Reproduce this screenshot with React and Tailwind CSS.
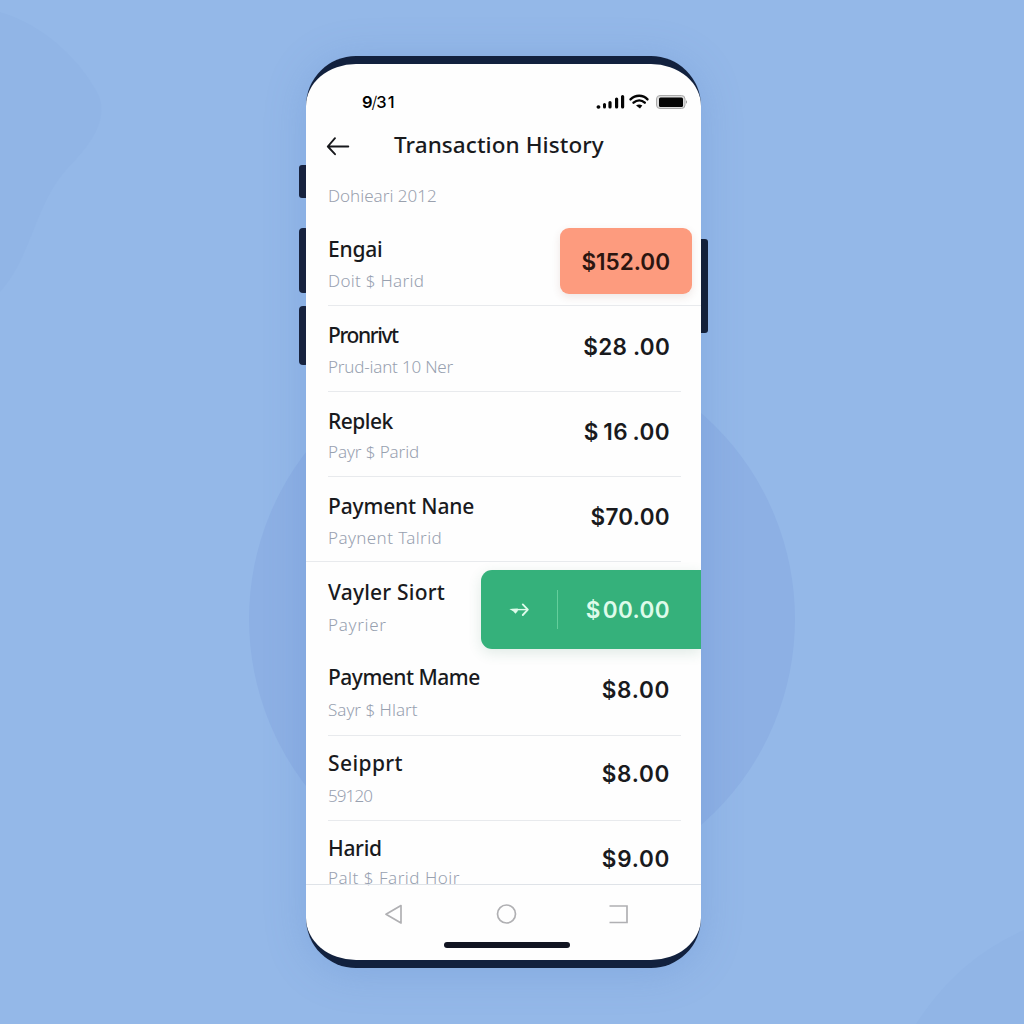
const rows = [
  { name: "Engai", sub: "Doit $ Harid", amount: "$152.00", row: "h-[86px] pl-[22px] pt-[14px]", line: "ml-[22px] mr-0", nameCls: "tracking-[-0.2px]", subCls: "mt-[5px] tracking-[0.3px]", tag: "orange" },
  { name: "Pronrivt", sub: "Prud-iant 10 Ner", amount: "$28 .00", row: "h-[86px] pl-[22px] pt-[14px]", line: "ml-[22px] mr-5", nameCls: "tracking-[-1.4px]", subCls: "mt-[5px] tracking-[-0.2px]", amtCls: "mt-px tracking-[0.25px]" },
  { name: "Replek", sub: "Payr $ Parid", amount: "$ 16 .00", row: "h-[85px] pl-[22px] pt-[14px]", line: "ml-[22px] mr-5", nameCls: "tracking-[-0.5px]", subCls: "mt-1 tracking-[-0.1px]", amtCls: "tracking-[0.4px] [word-spacing:-1.500px]" },
  { name: "Payment Nane", sub: "Paynent Talrid", amount: "$70.00", row: "h-[85px] pl-[22px] pt-[14px]", line: "ml-0 mr-5", nameCls: "tracking-[-0.15px]", subCls: "mt-[5px] tracking-[0.4px]", amtCls: "tracking-[0.3px]" },
  { name: "Vayler Siort", sub: "Payrier", amount: "$00.00", row: "h-[87px] pl-[22px] pt-[15px]", line: "hidden", nameCls: "tracking-[0.2px]", subCls: "mt-[6px] tracking-[0.7px]", tag: "green" },
  { name: "Payment Mame", sub: "Sayr $ Hlart", amount: "$8.00", row: "h-[87px] pl-[22px] pt-[13px]", line: "ml-[22px] mr-5", nameCls: "tracking-[-0.5px]", subCls: "mt-[6px]", amtCls: "mt-[2px] tracking-[0.7px]" },
  { name: "Seipprt", sub: "59120", amount: "$8.00", row: "h-[85px] pl-[22px] pt-[12px]", line: "ml-[22px] mr-5", nameCls: "tracking-[0.4px]", subCls: "mt-[6px] tracking-[-0.9px]", amtCls: "tracking-[0.7px]" },
  { name: "Harid", sub: "Palt $ Farid Hoir", amount: "$9.00", row: "h-[63px] pl-[22px] pt-[12px]", line: "hidden", nameCls: "tracking-[-0.3px]", subCls: "mt-[3px] tracking-[0.5px]", amtCls: "tracking-[0.7px]" },
];

function Amount({ row }) {
  if (row.tag === "orange") {
    return (
      <div className="mr-[9px] mt-[-6px] flex h-[66px] w-[132px] shrink-0 items-center justify-end rounded-[9px] bg-[#fd9b7e] pr-[22px] pt-px font-['Inter',sans-serif] text-[22.5px] font-semibold text-[#2b1510] shadow-[0_3px_8px_rgba(120,60,40,0.12)]">
        {row.amount}
      </div>
    );
  }
  if (row.tag === "green") {
    return (
      <div className="mt-[-7px] flex h-[79px] w-[220px] shrink-0 items-center rounded-l-[11px] bg-[#35b17b] text-[#defbea] shadow-[0_4px_14px_rgba(40,110,80,0.14)]">
        <svg className="ml-[28px]" width="21" height="16" viewBox="0 0 21 16" fill="none">
          <path d="M3 7.600H18" stroke="currentColor" strokeWidth="1.4" />
          <path d="M13.800 2.400L18.800 7.600L13.800 13" stroke="currentColor" strokeWidth="1.9" strokeLinecap="round" strokeLinejoin="round" />
          <path d="M0.300 6.900L8.800 6.400V9L6.500 11.700L4.200 9.200Z" fill="currentColor" />
        </svg>
        <div className="ml-[27px] h-[39px] w-px bg-[#64ce9c]" />
        <span className="ml-auto pr-[31px] pt-px font-['Inter',sans-serif] text-[22.5px] font-semibold tracking-[0.4px]"><span className="mr-[2px]">$</span>{row.amount.slice(1)}</span>
      </div>
    );
  }
  return <div className={`mr-[31px] whitespace-pre pt-[11px] font-['Inter',sans-serif] text-[22.5px] font-semibold leading-[30px] ${row.amtCls}`}>{row.amount}</div>;
}

export default function App() {
  return (
    <div className="relative flex h-[1024px] w-[1024px] overflow-hidden bg-[#94b8e8] pl-[306px] font-['Noto_Sans',sans-serif]">
      <svg className="absolute inset-0" width="1024" height="1024" viewBox="0 0 1024 1024">
        <path d="M0 12C45 25 82 62 99 96C108 121 91 144 66 170C35 205 31 258 0 292Z" fill="#91b5e6" />
        <path d="M1024 930C980 950 946 978 916 1024H1024Z" fill="#91b5e6" />
        <circle cx="522" cy="619" r="273" fill="#8db0e4" />
      </svg>

      <div className="relative mt-[56px] h-[912px] w-[395px] rounded-[50px] shadow-[0_4px_40px_rgba(85,130,200,0.28)]">
        <div className="absolute left-[-7px] top-[109px] h-[33px] w-[10px] rounded-[3px] bg-[#17233f]" />
        <div className="absolute left-[-7px] top-[172px] h-[65px] w-[10px] rounded-[4px] bg-[#17233f]" />
        <div className="absolute left-[-7px] top-[250px] h-[59px] w-[10px] rounded-[4px] bg-[#17233f]" />
        <div className="absolute right-[-7px] top-[183px] h-[94px] w-[10px] rounded-[3px] bg-[#13203a]" />

        <div className="relative flex h-full flex-col overflow-hidden rounded-[50px] border-y-8 border-[#12213e] bg-[#fefefe] text-[#191a1d]">
          <div className="flex h-[76px] shrink-0 items-center pl-[56px] pr-[14px] text-black">
            <div className="flex items-center font-['Inter',sans-serif] text-[16.500px] font-medium leading-5">
              <span className="font-semibold">9</span>
              <span className="-ml-px font-light">/</span>
              <span className="-ml-px">3</span>
              <span className="ml-px">1</span>
            </div>
            <svg className="ml-auto" width="92" height="18" viewBox="0 0 92 18" fill="none">
              <g stroke="#050505" strokeLinecap="round">
                <path d="M3.300 14H3.600" strokeWidth="3.600" />
                <path d="M9.500 11.500V14" strokeWidth="3" />
                <path d="M15 9.500V14M21.600 6V14M27.600 3.500V14" strokeWidth="3.200" />
                <path d="M35.500 6.400C40.500 1.500 48 1.500 52.500 6.400M38.500 9.700C42 6.600 46.500 6.600 49.800 9.700" strokeWidth="2.400" />
              </g>
              <path d="M41 12.500Q44.100 10.500 47.300 12.500L45 15.500Z" fill="#050505" />
              <rect x="61.500" y="2.500" width="28.500" height="13" rx="3.500" fill="#ddd" stroke="#aaa" />
              <path d="M91 7V11L92 9Z" fill="#888" />
              <rect x="64" y="4.500" width="24" height="9.500" rx="1.500" fill="#050505" />
            </svg>
          </div>

          <div className="flex h-[44px] shrink-0 items-start pl-[20px]">
            <svg className="-mt-[6px]" width="24" height="24" viewBox="0 0 24 24" fill="none" stroke="#17181c" strokeWidth="1.900" strokeLinecap="round" strokeLinejoin="round">
              <path d="M22.300 12.500H1.800M9 4.200L1.800 12.500L9 20.200" />
            </svg>
            <h1 className="ml-[44px] -mt-[10px] text-[22.500px] font-medium leading-[30px] tracking-[0.070px]">Transaction History</h1>
          </div>
          <div className="h-[36px] shrink-0 pl-[22px] text-[17px] font-light leading-6 text-[#9aa1ae]">Dohieari 2012</div>

          <main className="flex h-[664px] shrink-0 flex-col">
            {rows.map((r, i) => (
              <section key={i} className="shrink-0">
                <div className={`flex items-start justify-between ${r.row}`}>
                  <div className="whitespace-nowrap">
                    <div className={`text-[21px] font-medium leading-[30px] ${r.nameCls}`}>{r.name}</div>
                    <div className={`text-[17px] font-light leading-6 text-[#98a1b0] ${r.subCls}`}>{r.sub}</div>
                  </div>
                  <Amount row={r} />
                </div>
                <div className={`-mt-px h-px bg-[#e8eaed] ${r.line}`} />
              </section>
            ))}
          </main>

          <nav className="flex flex-1 flex-col items-center border-t border-[#dfe3e8]">
            <svg className="mt-[17px]" width="248" height="26" viewBox="0 0 248 26" fill="none" stroke="#b0b0b3" strokeWidth="1.700" strokeLinejoin="round">
              <path d="M21 3.500L6 12.300L21 21Z" />
              <circle cx="126.500" cy="12" r="9" />
              <path d="M229.500 4H247V20.500H229.500" strokeLinejoin="miter" />
            </svg>
            <div className="ml-[6px] mt-[14px] h-[6px] w-[126px] shrink-0 rounded-full bg-[#111421]" />
          </nav>
        </div>
      </div>
    </div>
  );
}
